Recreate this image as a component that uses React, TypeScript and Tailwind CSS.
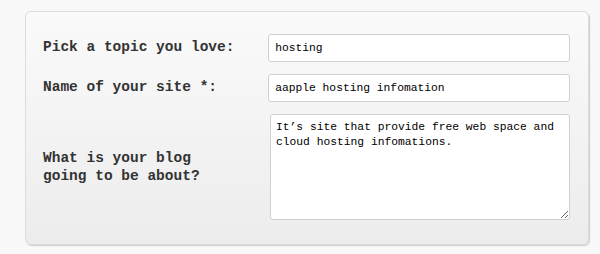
import { useState } from 'react';

const mono = { fontFamily: '"Liberation Mono", "DejaVu Sans Mono", monospace' };

export default function App() {
  const [topic, setTopic] = useState('hosting');
  const [name, setName] = useState('aapple hosting infomation');
  const [about, setAbout] = useState('It’s site that provide free web space and cloud hosting infomations.');

  return (
    <div className="w-[600px] h-[254px] bg-[#f8f8f8] pt-[11px] pl-[25px]" style={mono}>
      <div className="w-[564px] h-[234px] rounded-[6px] border border-[#dcdcdc] bg-gradient-to-b from-[#fafafa] to-[#ececec] shadow-[1px_1px_1px_rgba(0,0,0,0.18)] pt-[22px] pl-[17px] pr-[18px] flex flex-col gap-[12px]">
        <div className="flex items-center">
          <label className="w-[226px] text-[14.5px] font-bold text-[#333]">Pick a topic you love:</label>
          <input
            className="w-[303px] h-[28px] rounded-[3px] border border-[#d0d0d0] bg-white px-[6px] text-[11.3px] text-black outline-none"
            value={topic}
            onChange={e => setTopic(e.target.value)}
          />
        </div>
        <div className="flex items-center">
          <label className="w-[226px] text-[14.5px] font-bold text-[#333]">Name of your site *:</label>
          <input
            className="w-[303px] h-[28px] rounded-[3px] border border-[#d0d0d0] bg-white px-[6px] text-[11.3px] text-black outline-none"
            value={name}
            onChange={e => setName(e.target.value)}
          />
        </div>
        <div className="flex items-center">
          <label className="w-[227px] text-[14.5px] leading-[18px] font-bold text-[#333]">What is your blog<br />going to be about?</label>
          <textarea
            className="w-[300px] h-[106px] rounded-[3px] border border-[#d0d0d0] bg-white px-[5px] py-[5px] text-[11.3px] leading-[15px] text-black outline-none"
            value={about}
            onChange={e => setAbout(e.target.value)}
          />
        </div>
      </div>
    </div>
  );
}
